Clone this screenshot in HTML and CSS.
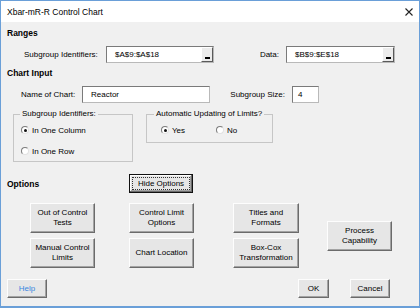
FILE: index.html
```html
<!DOCTYPE html>
<html lang="en">
<head>
  <meta charset="utf-8">
  <meta name="viewport" content="width=device-width, initial-scale=1">
  <title>Xbar-mR-R Control Chart</title>
  <link rel="stylesheet" href="styles.css">
</head>
<body>

  <div class="window">
    <div class="titlebar">
      <span class="title">Xbar-mR-R Control Chart</span>
      <svg class="close" width="8" height="8" viewBox="0 0 8 8"><path d="M0.5 0.5L7.5 7.5M7.5 0.5L0.5 7.5" stroke="#222" stroke-width="1.1" fill="none"/></svg>
    </div>

    <div class="content">
      <div class="heading">Ranges</div>
      <div class="row row-ranges">
        <span class="lbl lbl-ids">Subgroup Identifiers:</span>
        <div class="field field-ids"><span>$A$9:$A$18</span><span class="drop"></span></div>
        <span class="lbl lbl-data">Data:</span>
        <div class="field field-data"><span>$B$9:$E$18</span><span class="drop"></span></div>
      </div>

      <div class="heading heading-input">Chart Input</div>
      <div class="row row-input">
        <span class="lbl lbl-name">Name of Chart:</span>
        <div class="field field-name"><span>Reactor</span></div>
        <span class="lbl lbl-size">Subgroup Size:</span>
        <div class="field field-size"><span>4</span></div>
      </div>

      <div class="frames">
        <fieldset class="frame frame-ids">
          <legend>Subgroup Identifiers:</legend>
          <div class="radio"><span class="dot checked"></span>In One Column</div>
          <div class="radio radio-row"><span class="dot"></span>In One Row</div>
        </fieldset>
        <fieldset class="frame frame-auto">
          <legend>Automatic Updating of Limits?</legend>
          <div class="radios">
            <div class="radio radio-yes"><span class="dot checked"></span>Yes</div>
            <div class="radio"><span class="dot"></span>No</div>
          </div>
        </fieldset>
      </div>

      <div class="row row-options">
        <span class="heading heading-options">Options</span>
        <button class="btn btn-hide">Hide Options</button>
      </div>

      <div class="option-grid">
        <div class="col col-1">
          <button class="btn btn-opt">Out of Control<br>Tests</button>
          <button class="btn btn-opt">Manual Control<br>Limits</button>
        </div>
        <div class="col col-2">
          <button class="btn btn-opt">Control Limit<br>Options</button>
          <button class="btn btn-opt">Chart Location</button>
        </div>
        <div class="col col-3">
          <button class="btn btn-opt btn-wide">Titles and<br>Formats</button>
          <button class="btn btn-opt btn-wide">Box-Cox<br>Transformation</button>
        </div>
        <div class="col col-4">
          <button class="btn btn-opt">Process<br>Capability</button>
        </div>
      </div>

      <div class="footer">
        <button class="btn btn-help">Help</button>
        <button class="btn btn-ok">OK</button>
        <button class="btn btn-cancel">Cancel</button>
      </div>
    </div>
  </div>

</body>
</html>
```

FILE: styles.css
```css
  html,
  body {
    margin: 0;
    padding: 0;
  }

  body {
    font-family: "Liberation Sans", Arial, sans-serif;
    font-size: 8px;
    color: #000;
    background: #fff;
  }

  .window {
    box-sizing: border-box;
    width: 420px;
    height: 308px;
    border: 1px solid #6a9fd8;
    border-bottom-width: 2px;
    display: flex;
    flex-direction: column;
    background: #f0f0f0;
  }

  .titlebar {
    height: 21px;
    background: #fff;
    display: flex;
    align-items: center;
    justify-content: space-between;
    padding: 0 6px 0 6px;
  }
  .title {
    font-size: 8.5px;
  }

  .content {
    flex: 1;
    padding: 5px 6px 0 6px;
  }

  .heading {
    font-weight: bold;
    font-size: 8.5px;
    line-height: 12px;
  }
  .heading-input {
    margin-top: 4px;
  }

  .row {
    display: flex;
    align-items: center;
    height: 17px;
  }
  .row-ranges,
  .row-input {
    margin-top: 7px;
  }

  .lbl {
    box-sizing: border-box;
    white-space: nowrap;
  }
  .lbl-ids {
    margin-left: 17px;
    width: 82px;
  }
  .lbl-data,
  .lbl-size {
    text-align: right;
    padding-right: 7px;
  }
  .lbl-data {
    width: 72px;
  }
  .lbl-name {
    margin-left: 14px;
    width: 61px;
  }
  .lbl-size {
    width: 82px;
  }

  .field {
    box-sizing: border-box;
    height: 17px;
    background: #fff;
    border: 1px solid;
    border-color: #7a7a7a #b9b9b9 #b9b9b9 #7a7a7a;
    display: flex;
    align-items: center;
    padding-left: 8px;
  }
  .field-ids {
    width: 108px;
  }
  .field-data {
    width: 109px;
  }
  .field-name {
    width: 128px;
  }
  .field-size {
    width: 27px;
    padding-left: 5px;
  }

  .drop {
    box-sizing: border-box;
    width: 12px;
    height: 15px;
    margin-left: auto;
    background: #ececec;
    border: 1px solid;
    border-color: #fff #5a5a5a #5a5a5a #fff;
    display: flex;
    align-items: flex-end;
    justify-content: center;
  }
  .drop::after {
    content: '';
    width: 5px;
    height: 2px;
    background: #000;
    margin-bottom: 2px;
  }

  .frames {
    display: flex;
    align-items: flex-start;
    margin-top: 5px;
  }
  .frame {
    box-sizing: border-box;
    margin: 0;
    min-width: 0;
    border: 1px solid #c6c6c6;
  }
  .frame legend {
    padding: 0 2px;
    line-height: 12px;
  }
  .frame-ids {
    margin-left: 6px;
    width: 120px;
    padding: 4px 0 4px 7px;
  }
  .frame-ids legend {
    margin-left: -1px;
  }
  .frame-auto {
    margin-left: 13px;
    width: 127px;
    padding: 4px 0 6px 14px;
  }
  .frame-auto legend {
    margin-left: -7px;
  }

  .radios {
    display: flex;
  }
  .radio {
    display: flex;
    align-items: center;
    height: 12px;
    white-space: nowrap;
  }
  .radio-row {
    margin-top: 9px;
  }
  .radio-yes {
    width: 55px;
  }
  .dot {
    box-sizing: border-box;
    width: 8px;
    height: 8px;
    margin-right: 3px;
    border-radius: 50%;
    border: 1px solid;
    border-color: #7c7c7c #e2e2e2 #e2e2e2 #7c7c7c;
    background: #fff;
    display: flex;
    align-items: center;
    justify-content: center;
  }
  .dot.checked::after {
    content: '';
    width: 3px;
    height: 3px;
    border-radius: 50%;
    background: #111;
  }

  .btn {
    box-sizing: border-box;
    margin: 0;
    padding: 0;
    font: inherit;
    line-height: 10px;
    color: #000;
    text-align: center;
    background: #e6e6e6;
    border: 1px solid;
    border-color: #fdfdfd #6b6b6b #6b6b6b #fdfdfd;
    box-shadow: inset -1px -1px #a3a3a3;
  }

  .row-options {
    margin-top: 12px;
    height: 19px;
  }
  .heading-options {
    width: 122px;
  }
  .btn-hide {
    width: 64px;
    height: 19px;
    border: 1px solid #111;
    box-shadow: inset -1px -1px #6b6b6b, inset 1px 1px #fdfdfd, inset -2px -2px #a3a3a3;
    outline: 1px dotted #333;
    outline-offset: -4px;
  }

  .option-grid {
    display: flex;
    align-items: center;
    margin-top: 10px;
  }
  .col {
    display: flex;
    flex-direction: column;
    gap: 5px;
  }
  .col-1 {
    margin-left: 23px;
  }
  .col-2 {
    margin-left: 34px;
  }
  .col-3 {
    margin-left: 39px;
  }
  .col-4 {
    margin-left: 28px;
  }
  .btn-opt {
    width: 65px;
    height: 30px;
  }
  .btn-wide {
    width: 66px;
  }

  .footer {
    display: flex;
    margin-top: 11px;
    margin-right: 23px;
  }
  .footer .btn {
    height: 19px;
  }
  .btn-help {
    width: 40px;
    color: #3a86e0;
  }
  .btn-ok {
    width: 31px;
    margin-left: auto;
  }
  .btn-cancel {
    width: 40px;
    margin-left: 21px;
  }
```
